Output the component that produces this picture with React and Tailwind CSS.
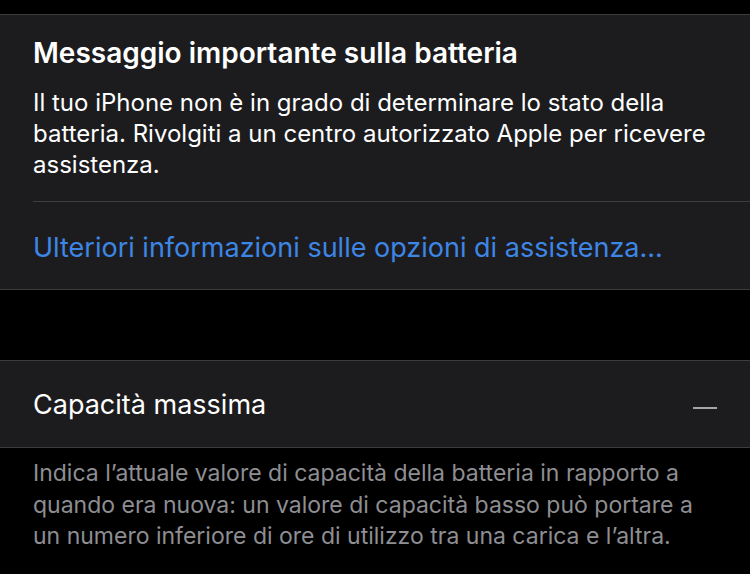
import React from 'react';

const font = { fontFamily: 'Inter, "Noto Sans", sans-serif' };

export default function App() {
  return (
    <div className="min-h-[574px] w-[750px] bg-black text-white" style={font}>
      <div className="h-[14px]" />

      {/* battery warning card */}
      <section className="border-y border-[#3d3d40] bg-[#1c1c1e]">
        <div className="pl-[33px] pr-4 pt-[21px] pb-[21px]">
          <h2 className="text-[28px] leading-[34px] font-semibold">
            Messaggio importante sulla batteria
          </h2>
          <p className="mt-[17px] text-[24px] leading-[31px] text-white">
            Il tuo iPhone non è in grado di determinare lo stato della batteria. Rivolgiti a un centro autorizzato Apple per ricevere assistenza.
          </p>
        </div>
        <div className="ml-[33px] border-t border-[#3d3d40]" />
        <div className="pl-[33px] h-[87px] pt-[30px]">
          <a className="block text-[27px] leading-[32px] text-[#3d86e6]">
            Ulteriori informazioni sulle opzioni di assistenza...
          </a>
        </div>
      </section>

      <div className="h-[70px]" />

      {/* max capacity row */}
      <section className="border-y border-[#3d3d40] bg-[#1c1c1e]">
        <div className="h-[86px] pl-[33px] pr-[33px] pt-[28px] flex items-start justify-between">
          <span className="text-[27px] leading-[32px]">Capacità massima</span>
          <span className="mt-[18px] block w-[24px] h-[2px] bg-[#a5a5a8]" />
        </div>
      </section>

      <p className="pl-[33px] pr-[30px] pt-[10px] text-[23px] leading-[31.5px] text-[#8e8e93]">
        Indica l’attuale valore di capacità della batteria in rapporto a quando era nuova: un valore di capacità basso può portare a un numero inferiore di ore di utilizzo tra una carica e l’altra.
      </p>
    </div>
  );
}
